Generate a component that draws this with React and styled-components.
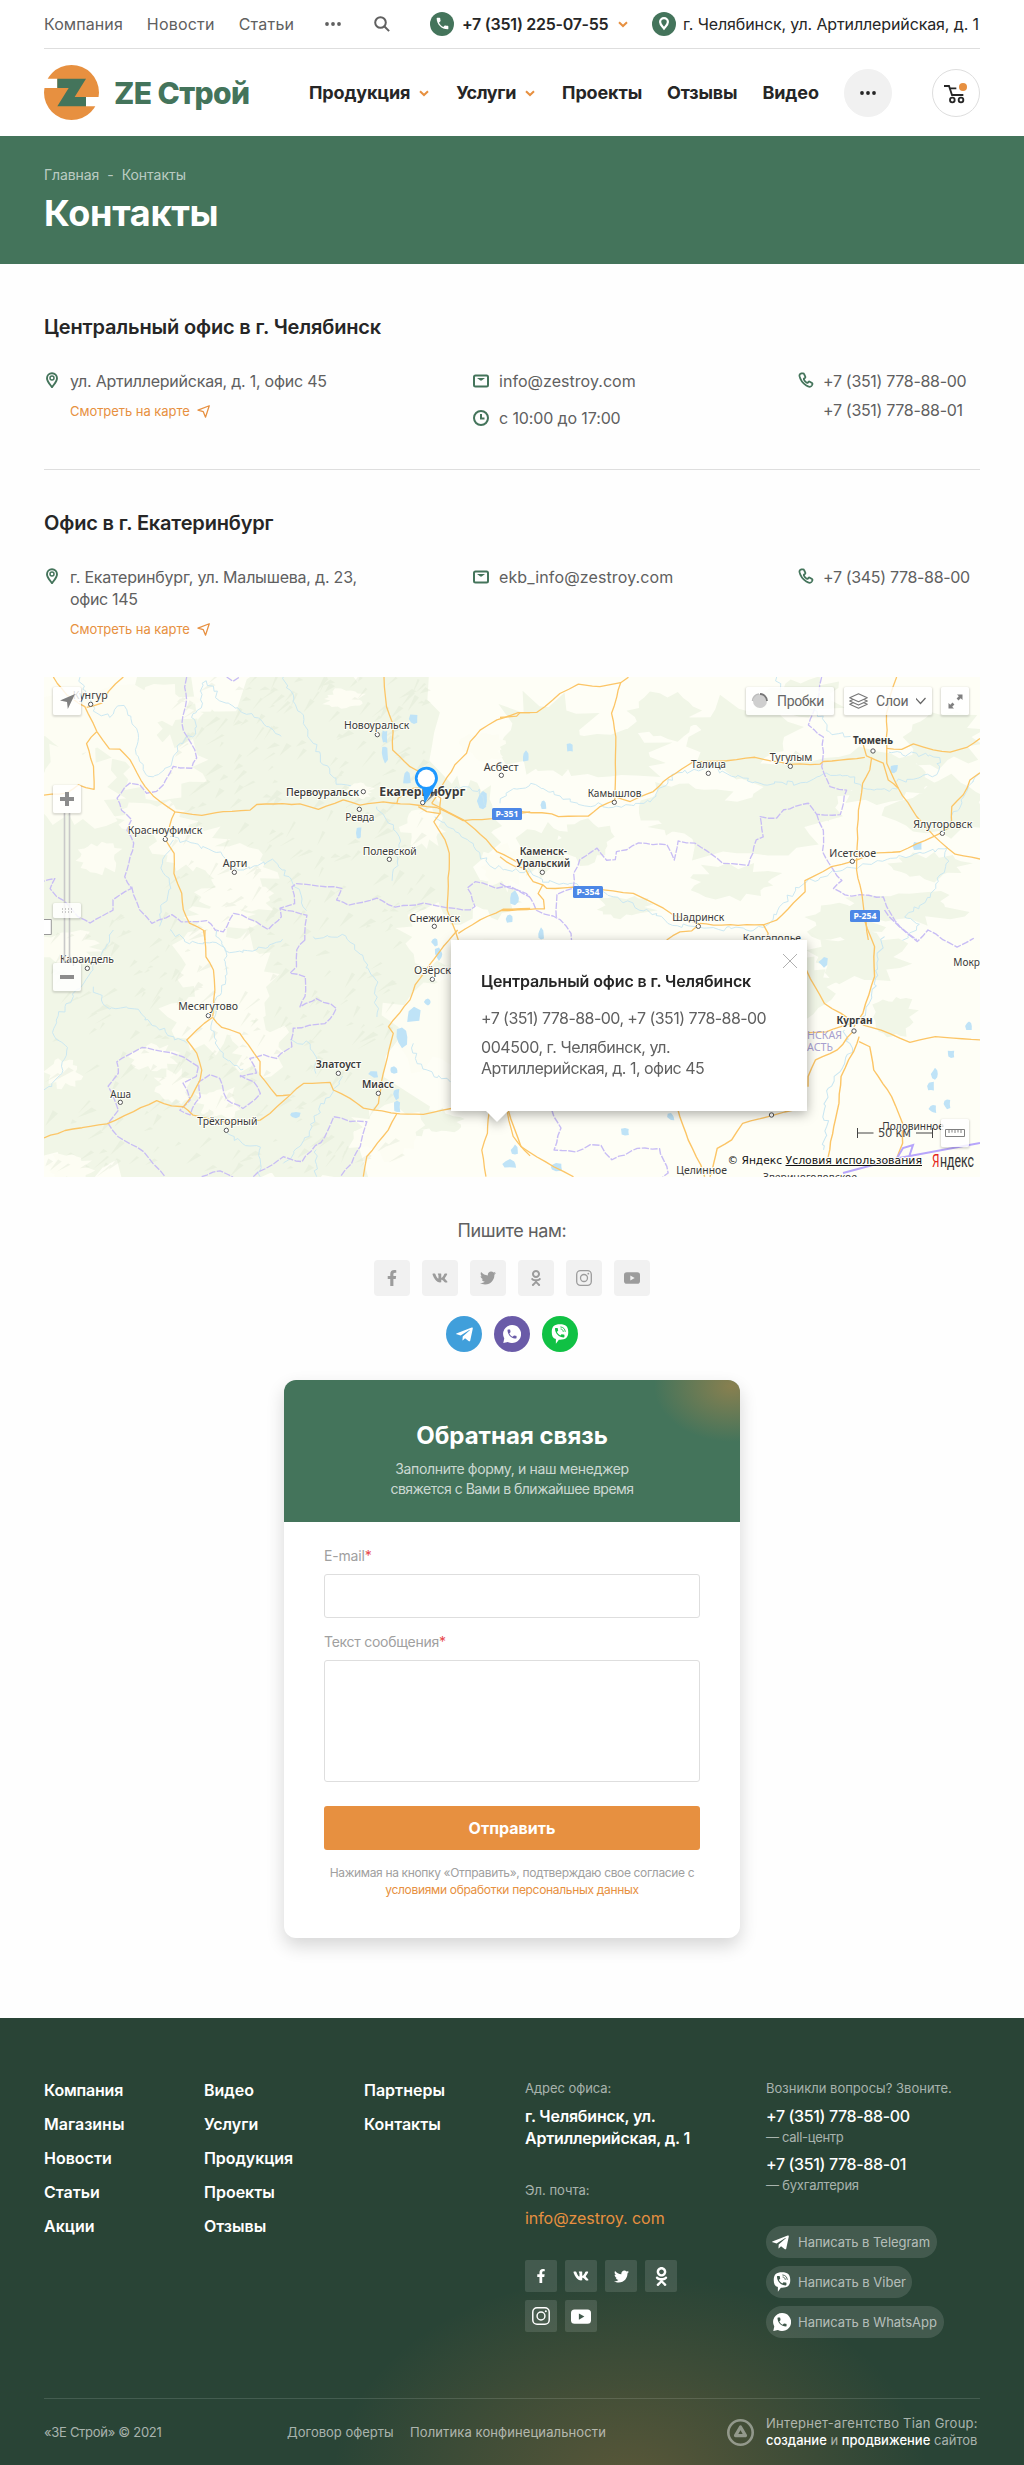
import React from "react";
import styled, { createGlobalStyle, css } from "styled-components";
import { FaFacebookF, FaVk, FaTwitter, FaOdnoklassniki, FaTelegramPlane } from "react-icons/fa";

const green = "#44745b";
const orange = "#e79040";
const dark = "#262626";
const grey = "#606060";
const line = "#dedede";
const pale = "rgba(255, 255, 255, 0.6)";

const GlobalStyle = createGlobalStyle`
  *, *::before, *::after { box-sizing: border-box; }
  body { margin: 0; background: #fefefe; font-family: Inter, "Open Sans", sans-serif; color: ${dark}; }
  svg { display: block; flex: none; }
  h1, h2, p, ul { margin: 0; padding: 0; }
  a { color: inherit; text-decoration: none; }
`;

/* ---------- shared text ---------- */

const Text = styled.span`
  display: ${(p) => (p.$block ? "block" : "inline-block")};
  white-space: nowrap;
  letter-spacing: ${(p) => p.$ls || 0}px;
`;

/* ---------- header ---------- */

const Header = styled.header`
  height: 136px;
  padding: 0 44px;
  background: #fff;
`;

const TopBar = styled.div`
  height: 49px;
  padding-bottom: 1px;
  display: flex;
  align-items: center;
  border-bottom: 1px solid ${line};
  font-size: 16px;
  font-weight: 400;
  line-height: 22px;
`;

const TopLinks = styled.nav`
  display: flex;
  gap: 24px;
  width: 281px;
  color: ${grey};
`;

const TopTools = styled.div`
  display: flex;
  align-items: center;
  gap: 33px;
  width: 105px;
  color: ${grey};
`;

const TopPhone = styled.div`
  display: flex;
  align-items: center;
  gap: 8px;
  width: 222px;
  font-weight: 600;
`;

const TopAddress = styled.div`
  display: flex;
  align-items: center;
  gap: 7px;
`;

const Badge = styled.span`
  flex: none;
  width: 24px;
  height: 24px;
  border-radius: 50%;
  background: ${green};
  color: #fff;
  display: flex;
  align-items: center;
  justify-content: center;
`;

const MainBar = styled.div`
  height: 87px;
  display: flex;
  align-items: center;
`;

const Logo = styled.a`
  display: flex;
  align-items: center;
  gap: 15px;
  width: 265px;
  color: ${green};
  font-size: 30px;
  font-weight: 800;
  line-height: 36px;
`;

const Nav = styled.nav`
  display: flex;
  align-items: center;
  gap: 25px;
  font-size: 18px;
  font-weight: 700;
  line-height: 24px;
`;

const NavItem = styled.a`
  display: flex;
  align-items: center;
  gap: 7px;
`;

const RoundButton = styled.button`
  width: 48px;
  height: 48px;
  padding: 0;
  border-radius: 50%;
  border: 1px solid ${(p) => (p.$outlined ? line : "#f1f1f1")};
  background: ${(p) => (p.$outlined ? "#fff" : "#f1f1f1")};
  color: ${dark};
  display: flex;
  align-items: center;
  justify-content: center;
  margin-left: ${(p) => (p.$outlined ? "auto" : 0)};
`;

/* ---------- hero ---------- */

const Hero = styled.section`
  height: 128px;
  padding: 29px 44px 0;
  background: ${green};
  color: #fff;
`;

const Crumbs = styled.div`
  display: flex;
  gap: 8px;
  font-size: 14px;
  line-height: 20px;
  color: rgba(255, 255, 255, 0.65);
`;

const Title = styled.h1`
  margin-top: 5px;
  font-size: 36px;
  font-weight: 700;
  line-height: 46px;
  letter-spacing: -0.25px;
`;

/* ---------- offices ---------- */

const Page = styled.main`
  padding: 49px 44px 80px;
`;

const Office = styled.section`
  ${(p) =>
    p.$divided &&
    css`
      padding-bottom: 40px;
      margin-bottom: 39px;
      border-bottom: 1px solid ${line};
    `}
`;

const OfficeName = styled.h2`
  font-size: 20px;
  font-weight: 600;
  line-height: 28px;
  letter-spacing: -0.17px;
`;

const OfficeGrid = styled.div`
  display: grid;
  grid-template-columns: 429px 325px 1fr;
  align-items: start;
  margin-top: 29px;
  font-size: 16px;
  font-weight: 400;
  line-height: 22px;
  color: ${grey};
`;

const Stack = styled.div`
  display: flex;
  flex-direction: column;
  align-items: flex-start;
  gap: ${(p) => p.$gap || 0}px;
`;

const Contact = styled.div`
  display: flex;
  align-items: flex-start;
  gap: ${(p) => p.$gap ?? 10}px;
  > svg { margin-top: ${(p) => p.$drop ?? 3}px; }
`;

const MapLink = styled.a`
  display: flex;
  align-items: center;
  gap: 7px;
  font-size: 13px;
  line-height: 18px;
  color: ${orange};
`;

/* ---------- map ---------- */

const MapBox = styled.section`
  position: relative;
  height: 500px;
  margin-top: 39px;
  overflow: hidden;
`;

const MapButton = styled.button`
  position: absolute;
  left: ${(p) => p.$x}px;
  top: ${(p) => p.$y}px;
  width: ${(p) => p.$w || 28}px;
  height: ${(p) => p.$h || 28}px;
  padding: 0 ${(p) => (p.$w > 28 ? 5 : 0)}px;
  border: 0;
  border-radius: 2px;
  background: rgba(255, 255, 255, 0.82);
  box-shadow: 0 1px 2px 1px rgba(0, 0, 0, 0.13);
  display: flex;
  align-items: center;
  gap: ${(p) => (p.$w > 28 ? 8 : 0)}px;
  justify-content: ${(p) => (p.$w > 28 ? "flex-start" : "center")};
  color: #666;
  font-family: Roboto, sans-serif;
  font-size: 14px;
`;

const Balloon = styled.div`
  position: absolute;
  left: 407px;
  top: 263px;
  width: 356px;
  height: 171px;
  padding: 30px 30px 0;
  background: #fff;
  filter: drop-shadow(0 3px 6px rgba(0, 0, 0, 0.33));
  font-size: 16px;
  line-height: 21px;
  color: ${grey};

  &::after {
    content: "";
    position: absolute;
    left: 35px;
    top: 171px;
    border: 11.5px solid transparent;
    border-top-color: #fff;
    border-bottom: 0;
  }
`;

const BalloonTitle = styled.div`
  margin: 1px 0 16px;
  font-weight: 600;
  color: ${dark};
`;

const BalloonRow = styled.div`
  margin-bottom: 8px;
`;

const CloseButton = styled.button`
  position: absolute;
  right: 9px;
  top: 13px;
  padding: 0;
  border: 0;
  background: none;
`;

/* ---------- feedback ---------- */

const Write = styled.section`
  display: flex;
  flex-direction: column;
  align-items: center;
  padding-top: 41px;
  font-size: 18px;
  line-height: 26px;
  color: ${grey};
`;

const IconRow = styled.div`
  display: flex;
  gap: 12px;
  margin-top: ${(p) => p.$top}px;
`;

const Tile = styled.a`
  width: ${(p) => (p.$footer ? 32 : 36)}px;
  height: ${(p) => (p.$footer ? 32 : 36)}px;
  border-radius: ${(p) => (p.$footer ? 2 : 4)}px;
  background: ${(p) => (p.$footer ? "rgba(255,255,255,0.12)" : "#f1f1f1")};
  color: ${(p) => (p.$footer ? "#fff" : "#9c9c9c")};
  display: flex;
  align-items: center;
  justify-content: center;
`;

const Disc = styled.a`
  width: 36px;
  height: 36px;
  border-radius: 50%;
  background: ${(p) => p.$color};
  color: #fff;
  display: flex;
  align-items: center;
  justify-content: center;
`;

const Card = styled.form`
  width: 456px;
  height: 558px;
  margin: 28px auto 0;
  border-radius: 12px;
  background: #fff;
  box-shadow: 0 8px 18px rgba(0, 0, 0, 0.16);
  overflow: hidden;
`;

const CardHead = styled.div`
  height: 142px;
  padding-top: 40px;
  text-align: center;
  color: #fff;
  background: radial-gradient(ellipse 78px 56px at 448px 6px, rgba(231, 144, 64, 0.42), rgba(231, 144, 64, 0)) ${green};
`;

const CardTitle = styled.div`
  font-size: 24px;
  font-weight: 700;
  line-height: 31px;
`;

const CardLead = styled.p`
  margin-top: 8px;
  font-size: 14px;
  line-height: 20px;
  color: rgba(255, 255, 255, 0.74);
`;

const CardBody = styled.div`
  padding: 25px 40px 0;
`;

const Label = styled.label`
  display: block;
  margin-top: ${(p) => p.$top || 0}px;
  height: 27px;
  font-size: 14px;
  line-height: 18px;
  color: #a0a0a0;
`;

const Required = styled.span`
  color: #e8484c;
`;

const fieldStyle = css`
  display: block;
  width: 100%;
  border: 1px solid ${line};
  border-radius: 3px;
  background: #fff;
  outline: none;
  padding: 8px 12px;
`;

const Input = styled.input`
  ${fieldStyle}
  height: 44px;
`;

const Area = styled.textarea`
  ${fieldStyle}
  height: 122px;
  resize: none;
`;

const Submit = styled.button`
  width: 100%;
  height: 44px;
  margin-top: 24px;
  border: 0;
  border-radius: 3px;
  background: ${orange};
  color: #fff;
  font: 700 16px Inter, sans-serif;
`;

const Consent = styled.p`
  margin-top: 14px;
  text-align: center;
  font-size: 12px;
  line-height: 17px;
  color: #a0a0a0;
  a { color: ${orange}; }
`;

/* ---------- footer ---------- */

const Footer = styled.footer`
  height: 447px;
  padding: 61px 44px 0;
  color: #fff;
  background: radial-gradient(ellipse 300px 215px at 630px 470px, rgba(231, 144, 64, 0.26), rgba(231, 144, 64, 0)) #294436;
`;

const FooterGrid = styled.div`
  display: grid;
  grid-template-columns: 160px 160px 161px 241px 1fr;
  height: 319px;
`;

const FooterLinks = styled.div`
  display: flex;
  flex-direction: column;
  gap: 12px;
  font-size: 16px;
  font-weight: 600;
  line-height: 22px;
`;

const Caption = styled.div`
  margin-top: ${(p) => p.$top || 0}px;
  font-size: 13px;
  line-height: 18px;
  color: ${pale};
`;

const Value = styled.div`
  margin-top: ${(p) => p.$top ?? 8}px;
  font-size: 16px;
  font-weight: ${(p) => p.$weight || 500};
  line-height: 22px;
  color: ${(p) => p.$color || "#fff"};
`;

const FooterTiles = styled.div`
  display: flex;
  flex-wrap: wrap;
  gap: 8px;
  width: 152px;
  margin-top: 31px;
`;

const Pills = styled.div`
  display: flex;
  flex-direction: column;
  align-items: flex-start;
  gap: 8px;
  margin-top: 32px;
`;

const Pill = styled.a`
  width: ${(p) => p.$w}px;
  height: 32px;
  padding-left: 5px;
  border-radius: 16px;
  background: rgba(255, 255, 255, 0.12);
  display: flex;
  align-items: center;
  font-size: 13px;
  color: rgba(255, 255, 255, 0.62);
`;

const PillIcon = styled.span`
  width: 27px;
  color: #fff;
  display: flex;
  padding-left: ${(p) => p.$pad || 0}px;
`;

const BottomBar = styled.div`
  display: grid;
  grid-template-columns: 243px 123px 317px 39px 1fr;
  align-items: center;
  height: 67px;
  border-top: 1px solid rgba(255, 255, 255, 0.13);
  font-size: 13px;
  line-height: 17px;
  color: ${pale};
  b { font-weight: 500; color: #fff; }
`;

/* ---------- icons ---------- */

const handset =
  "M6.62 10.79c1.44 2.83 3.76 5.14 6.59 6.59l2.2-2.2c.27-.27.67-.36 1.02-.24 1.12.37 2.33.57 3.57.57.55 0 1 .45 1 1V20c0 .55-.45 1-1 1-9.39 0-17-7.61-17-17 0-.55.45-1 1-1h3.5c.55 0 1 .45 1 1 0 1.25.2 2.45.57 3.57.11.35.03.74-.25 1.02l-2.2 2.2z";
const tube =
  "M5.2 2.1 3.6 2.7C2.4 3.3 2 4.5 2.3 6.2c1 5 5 10.6 10.2 14.2 2 1.3 4.4 2 6 1.7 1.2-.2 2-1 2.5-2.2l.6-1.7c.2-.7 0-1.3-.6-1.7l-3.3-2c-.7-.4-1.4-.3-1.9.3l-1 1.2c-.4.5-1 .5-1.6.2-1.7-1.1-3.3-2.9-4.3-4.9-.3-.6-.2-1.1.3-1.5l1.2-.9c.6-.5.8-1.1.5-1.9L9.2 3.2c-.3-.8-.9-1.2-1.7-1.2z";

const Chevron = () => (
  <svg width="14" height="14" viewBox="0 0 14 14" fill="none" stroke={orange} strokeWidth="2">
    <path d="M3 5.2 7 9l4-3.8" />
  </svg>
);
const Dots = () => (
  <svg width="16" height="6" viewBox="0 0 16 6" fill="currentColor">
    <circle cx="2" cy="3" r="1.9" /><circle cx="8" cy="3" r="1.9" /><circle cx="14" cy="3" r="1.9" />
  </svg>
);
const SearchIcon = () => (
  <svg width="16" height="16" viewBox="0 0 16 16" fill="none" stroke="currentColor" strokeWidth="2">
    <circle cx="6.5" cy="6.5" r="5.3" /><path d="m10.5 10.5 4.6 4.6" />
  </svg>
);
const LogoMark = () => (
  <svg width="55" height="55" viewBox="132 195 165 165">
    <circle cx="214.5" cy="277.5" r="82.5" fill={orange} />
    <path d="M130 236h42v28h-42zM258 291h42v28h-42z" fill="#fff" />
    <path d="M172 236h86l-34 55h34v28h-86l34-55h-34z" fill={green} />
  </svg>
);
const CartIcon = () => (
  <svg width="24" height="22" viewBox="1296 246 72 66" fill="none" stroke={dark} strokeWidth="5.5">
    <path d="M1296 258h15l9 27h34M1315 265h18" />
    <circle cx="1321" cy="300" r="7" /><circle cx="1347" cy="300" r="7" />
    <circle cx="1353" cy="261" r="12" fill={orange} stroke="none" />
  </svg>
);
const PinIcon = () => (
  <svg width="24" height="16" viewBox="0 0 24 16" fill="none" stroke={green}>
    <path d="M8 15.2C5.8 12 3 9.3 3 6.2a5 5 0 0 1 10 0c0 3.1-2.8 5.8-5 9z" strokeWidth="1.9" />
    <circle cx="8" cy="6" r="2" strokeWidth="1.5" />
  </svg>
);
const BadgePin = () => (
  <svg width="12" height="14" viewBox="0 0 12 14" fill="none" stroke="#fff">
    <path d="M6 11.5C4.300 9.300 2.100 7.500 2.100 5a3.900 3.900 0 0 1 7.800 0c0 2.500-2.200 4.300-3.900 6.500z" strokeWidth="2.200" />
  </svg>
);
const MailIcon = () => (
  <svg width="16" height="16" viewBox="0 0 16 16">
    <rect x="1" y="2.500" width="14" height="11" rx="1.500" fill="none" stroke={green} strokeWidth="2" />
    <path d="M4 5h8L9 7.300q-1 .8-2 0z" fill={green} />
  </svg>
);
const ClockIcon = () => (
  <svg width="16" height="16" viewBox="0 0 16 16" fill="none" stroke={green} strokeWidth="2">
    <circle cx="8" cy="8" r="7" /><path d="M8 4v4.500h3.500" />
  </svg>
);
const PhoneIcon = () => (
  <svg width="16" height="16" viewBox="0 0 24 24" fill="none" stroke={green} strokeWidth="2.700">
    <path d={tube} />
  </svg>
);
const ArrowIcon = () => (
  <svg width="13" height="13" viewBox="0 0 12 12" fill="none" stroke={orange} strokeWidth="1.200" strokeLinejoin="round">
    <path d="M11.300.7.900 4.700l4.900 1.500L7.900 11.200z" />
  </svg>
);
const InstagramIcon = ({ size = 16 }) => (
  <svg width={size} height={size} viewBox="0 0 16 16" fill="none" stroke="currentColor" strokeWidth="1.300">
    <rect x=".7" y=".7" width="14.600" height="14.600" rx="3.800" />
    <circle cx="8" cy="8" r="3.500" /><circle cx="12.300" cy="3.700" r=".9" fill="currentColor" stroke="none" />
  </svg>
);
const TubeIcon = ({ size = 16, hole }) => (
  <svg width={size} height={size * 0.75} viewBox="0 0 16 12">
    <rect y=".3" width="16" height="11.400" rx="2.800" fill="currentColor" />
    <path d="M6.300 3.500v5L10.700 6z" fill={hole} />
  </svg>
);
const WhatsAppIcon = ({ hole }) => (
  <svg width="18" height="18" viewBox="0 0 24 24">
    <path d="M12 0a12 12 0 1 1-5.500 22.600L.4 24l1.300-6A12 12 0 0 1 12 0z" fill="currentColor" />
    <path d={handset} fill={hole} transform="translate(4 4) scale(.67)" />
  </svg>
);
const ViberIcon = ({ hole }) => (
  <svg width="18" height="20" viewBox="0 0 24 26">
    <path d="M12 0c7.500 0 11 3 11 10.200S19.500 20.500 12 20.500h-1.500L6.500 26v-6.300C2.500 18.500 1 15.500 1 10.200 1 3 4.500 0 12 0z" fill="currentColor" />
    <path d={handset} fill={hole} transform="translate(3.200 2.800) scale(.7)" />
    <path d="M12.500 3.600c3.900.2 6.400 2.800 6.500 6.600M12.800 6.300c2.200.2 3.500 1.600 3.600 3.900" fill="none" stroke={hole} strokeWidth="1.200" />
  </svg>
);
const AgencyMark = () => (
  <svg width="27" height="27" viewBox="0 0 27 27" fill="none" stroke="rgba(255,255,255,.42)" strokeLinejoin="round">
    <circle cx="13.500" cy="13.500" r="12.200" strokeWidth="2.600" />
    <path d="M13.500 8 18.500 16.600H8.500z" strokeWidth="3.200" />
  </svg>
);

/* ---------- map drawing ---------- */

const seeded = (seed) => () => {
  seed = (seed * 16807) % 2147483647;
  return seed / 2147483647;
};

const parse = (s) => s.split(" ").map((p) => p.split(",").map(Number));

// Breaks a polyline into short segments and shifts each joint a little.
const wiggle = (s, amp, step, seed = 7) => {
  const rnd = seeded(seed + s.length * 31);
  const pts = parse(s);
  const out = [pts[0]];
  for (let i = 1; i < pts.length; i++) {
    const [ax, ay] = pts[i - 1];
    const [bx, by] = pts[i];
    const n = Math.max(1, Math.round(Math.hypot(bx - ax, by - ay) / step));
    for (let k = 1; k <= n; k++) {
      const end = k === n ? 0.4 : 1;
      out.push([
        ax + ((bx - ax) * k) / n + (rnd() - 0.5) * amp * end,
        ay + ((by - ay) * k) / n + (rnd() - 0.5) * amp * end,
      ]);
    }
  }
  return "M" + out.map((p) => p.map((v) => v.toFixed(1)).join(" ")).join("L");
};

// A jagged blob: [centre x, centre y, radius x, radius y].
const blob = ([cx, cy, rx, ry], i) => {
  const rnd = seeded(cx * 13 + cy * 7 + i * 101 + 1);
  const n = rx < 14 ? 8 : 26;
  let d = "";
  for (let k = 0; k < n; k++) {
    const a = (k / n) * Math.PI * 2;
    const r = 0.62 + rnd() * 0.55;
    d += `${k ? "L" : "M"}${(cx + Math.cos(a) * rx * r).toFixed(1)} ${(cy + Math.sin(a) * ry * r).toFixed(1)}`;
  }
  return d + "Z";
};

const woods = [
  [120, 270, 175, 300], [250, 100, 140, 110], [300, 230, 130, 120], [230, 400, 170, 130], [330, 70, 90, 90],
  [390, 190, 60, 90], [340, 300, 70, 40], [160, 130, 60, 90], [60, 420, 110, 90], [100, 130, 50, 60],
  [500, 60, 55, 45], [560, 80, 70, 28], [620, 40, 38, 26], [700, 60, 60, 40], [700, 150, 90, 40], [640, 130, 50, 30],
  [760, 110, 60, 32], [840, 100, 60, 28], [900, 130, 55, 30], [860, 230, 60, 18], [540, 165, 34, 24], [500, 175, 28, 26],
  [580, 230, 30, 12], [690, 205, 50, 18], [885, 190, 40, 14], [800, 245, 40, 20], [430, 140, 28, 36], [450, 220, 26, 20],
  [755, 310, 40, 30], [815, 280, 50, 26], [420, 400, 14, 8], [850, 340, 22, 24], [395, 445, 26, 12], [5, 60, 30, 40],
  [30, 205, 60, 50], [760, 20, 40, 20], [900, 60, 40, 30],
];
const fields = [
  [60, 45, 85, 40], [120, 90, 45, 30], [35, 110, 45, 45], [110, 140, 40, 16], [55, 180, 24, 16],
  [145, 170, 38, 28], [190, 190, 45, 22], [195, 220, 46, 20], [180, 240, 36, 14], [115, 30, 40, 22],
  [315, 114, 14, 8], [165, 280, 34, 45], [165, 340, 50, 34], [200, 310, 34, 50], [215, 370, 30, 28], [110, 380, 24, 14],
  [22, 270, 36, 16], [20, 395, 18, 16], [130, 410, 20, 18], [175, 425, 24, 16],
  [380, 150, 22, 20], [300, 22, 22, 10], [440, 70, 24, 14],
  [385, 350, 46, 46], [390, 260, 34, 32], [345, 455, 40, 30], [445, 300, 40, 40],
  [25, 490, 26, 14], [460, 190, 26, 22],
];

const roads = {
  nw: [
    "70,21 110,75 165,110 200,185 238,237 270,238 300,270 345,350 370,378 435,425 515,436 580,425 660,420 680,403 810,402 865,418 940,390 990,405 1060,396 1165,406 1220,412 1300,452 1385,445 1500,425",
    "280,21 235,65 215,100 170,112", "200,185 170,220 190,290 192,358 145,345 110,370 42,375",
    "435,425 418,470 406,508 432,550 432,610 455,670 460,720 478,760 520,780 525,810",
    "1062,21 1070,110 1088,160 1088,240 1140,290 1180,310 1185,400",
    "1500,128 1465,128 1400,150 1350,180 1320,215 1310,250 1275,285 1240,340 1205,400",
    "1100,402 1105,385 1150,355 1190,350 1232,385 1230,430 1190,425 1165,410",
    "1205,400 1300,450 1370,510 1400,545 1460,575 1500,590", "1230,430 1212,455 1245,510 1258,550 1252,720 1275,780 1285,810",
    "1285,790 1350,750 1420,718 1500,715",
  ],
  ne: [
    "0,142 50,138 60,128 110,128 180,70 235,42 300,50 362,38 386,22", "362,38 350,80 335,130 347,200 345,390",
    "345,390 300,410 265,438 175,440 155,432 65,425",
    "345,380 390,395 460,365 490,335 545,297 580,275 680,272 765,262 870,283 960,283 970,275 1095,262",
    "0,560 45,590 75,595 100,635 130,645 140,655 220,652 310,660 400,670 490,715 520,735 600,762",
    "128,645 115,670 130,690 133,716 0,722",
    "600,760 640,765 790,764 830,750 915,665 915,632 995,590 1055,575 1130,548 1200,545 1300,500 1325,488 1355,465 1355,410 1390,375 1410,330 1440,308",
    "790,764 805,790 800,810", "500,810 540,785 575,782 600,762",
    "1190,21 1170,80 1160,130 1160,280 1195,355 1250,440 1300,495 1365,553 1440,567",
    "1090,225 1100,258 1150,280 1165,330 1195,355", "1160,235 1205,238 1240,222 1300,240 1350,246 1400,232 1440,205",
    "1115,262 1110,300 1088,340 1075,420 1070,560 1070,600 1085,670 1105,810",
  ],
  sw: [
    "525,0 528,80 550,120 555,180 548,260", "548,262 500,300 470,330 500,370 515,420 510,450 485,500 460,530 490,555 600,580 690,570 720,550 780,495 820,460 900,458 910,480 960,505 1000,535 1110,552 1180,553 1263,535",
    "548,262 575,292 630,310 655,345 690,395 690,435 740,497 780,495", "42,624 105,602 230,582 310,545 380,512 425,528 460,530",
    "1283,0 1240,50 1155,165 1140,210 1075,290 1090,310 1060,430 1045,520 1030,540", "1100,552 1075,600 1010,680 1000,740",
    "1378,545 1372,610 1355,660 1368,740", "1432,545 1450,620 1500,678",
  ],
  se: [
    "1035,180 1085,280 1150,325", "1040,368 1090,365 1130,350 1166,335", "1163,365 1120,420 1060,450 1040,500 1040,530",
    "1195,30 1222,110 1222,200 1190,310 1166,350", "1190,345 1240,360 1320,397 1390,380 1513,390",
    "1180,380 1175,400 1130,500 1125,580 1110,650 1095,740", "1180,395 1210,410 1220,480 1270,560 1300,640 1300,700 1285,740",
    "1000,600 930,620 860,640 830,690 790,715 780,760 770,800", "682,600 710,690 745,765 755,800", "215,600 250,710 340,770 395,800",
  ],
};
const borders = {
  nw: [
    "470,21 465,50 470,90 455,160 470,200 495,240 500,265 485,295 430,290 400,345 380,365 350,370 330,345 300,340 260,385 275,420 305,450 290,480 310,520 285,620 305,655 250,690 250,720 180,760 145,740 100,690 80,680 60,655 75,625 42,632",
    "305,650 330,720 365,760 425,735 455,755 530,752 555,780 580,785 610,730 680,755 715,778 755,740 750,715 795,700 785,650 800,640 935,655 920,690 955,705 1040,685 1095,712 1180,700 1320,720 1335,710 1312,655 1335,635 1400,655 1440,650 1500,680",
    "750,715 830,735 825,810", "590,21 610,34 628,21",
  ],
  ne: [
    "965,21 955,90 925,165 970,200 965,290 990,350 1040,360 1020,435 950,432 925,400 850,420 830,445 780,440 790,500 770,510 745,585 670,580 585,520 535,512 522,570 500,525 415,518 380,540 350,545 345,570 320,570 290,535 240,570 222,610 220,655 170,672 168,745",
    "0,640 50,660 80,670 110,720 180,750 212,790 215,810",
    "950,432 970,480 968,545 1000,600 1025,632 1000,655 1035,675 1150,680 1160,710 1200,770 1250,810",
  ],
  sw: [
    "825,30 800,60 800,110 780,130 825,140 825,200 810,230 860,205 920,235 885,280 790,295 785,350 740,385 700,375 660,385 680,430 630,440",
    "505,410 460,380 335,352 260,395 265,430 235,470 265,540 235,580 265,620 340,665 370,700 405,740",
    "505,410 500,440 460,460 480,510 450,540 480,555 510,500 505,455 540,435 570,445 590,510 640,535 690,490 670,455 630,435",
    "670,740 760,680 815,695 885,620 910,560 960,575 1010,575 990,650 965,700 930,740", "515,740 570,722 610,740",
  ],
  se: [
    "335,600 360,655 340,720 400,725 440,705 470,705 500,750 570,715 630,715 655,790 640,800",
    "1250,0 1290,50 1340,95 1370,60 1450,112 1495,85",
  ],
};
const rivers = {
  nw: [
    "150,21 160,60 200,130 240,140 280,105 300,140 325,190 315,240 340,300 370,320 420,290 450,220 500,190 490,130 520,100 510,60 530,30 570,90 650,130 700,160 755,200",
    "760,21 790,90 820,150 850,220 890,290 920,340 960,350", "420,500 480,520 560,545 640,600 730,570 790,640 830,720",
    "1040,410 1070,450 1110,500 1105,580 1085,630", "1215,440 1270,480 1330,520 1380,590 1500,605", "430,510 395,590 420,640 400,700 390,770", "1200,370 1300,350 1350,360 1370,410",
  ],
  ne: [
    "0,400 40,355 110,345 180,380 230,400 350,410 450,395 530,310 640,295 760,340 900,340 980,310 1050,320 1100,360 1190,360",
    "1190,335 1240,330 1310,315 1320,260 1200,250 1165,245", "75,580 130,635 220,640 340,680 430,720 530,765 640,775 760,780 810,760 850,700 910,640 1020,600 1160,570 1340,535 1340,580 1290,680 1215,740 1260,760 1210,810",
    "830,21 850,80 900,110 970,140 980,180 1050,200", "1440,310 1400,360 1370,420 1345,480",
  ],
  sw: [
    "250,0 220,60 170,150 110,220 80,270 70,320 110,350 95,430 42,480", "190,170 240,240 310,235 380,290 470,340",
    "560,0 585,60 585,150 560,200 540,300 580,380 640,420", "850,20 950,20 1000,90 1040,150 1040,260", "420,0 480,40 560,40 600,70 680,60 760,30",
    "690,740 690,650 640,640 590,600", "860,740 860,660", "1150,340 1160,400 1220,440 1263,455", "780,330 840,340 860,390 860,430", "760,700 840,620 850,560 900,500 940,440",
  ],
  se: ["1250,80 1230,150 1225,230 1200,290 1180,340", "1140,360 1160,430 1110,510 1085,580 1090,650 1080,720"],
};
const lakes = [
  [370, 42, 5, 6], [341, 60, 3, 8], [341, 76, 4, 9], [363, 100, 5, 8], [439, 124, 6, 12], [482, 80, 4, 6], [526, 71, 4, 5], [315, 156, 3, 7],
  [471, 221, 6, 7], [466, 242, 4, 5], [500, 128, 3, 5], [497, 257, 4, 6], [370, 339, 9, 8], [358, 360, 8, 12], [330, 397, 5, 4], [353, 430, 4, 6],
  [395, 277, 5, 6], [391, 265, 4, 5], [384, 325, 4, 4], [466, 487, 8, 5], [471, 473, 4, 5], [512, 490, 8, 5], [581, 455, 5, 4], [627, 440, 4, 4],
  [850, 92, 5, 5], [780, 285, 5, 5], [925, 349, 4, 6], [907, 377, 4, 4], [891, 397, 4, 6], [887, 409, 4, 6], [903, 427, 4, 5], [889, 432, 4, 5],
  [350, 393, 5, 4], [874, 169, 5, 5], [352, 417, 4, 6], [252, 438, 6, 3],
];

const labels = {
  nw: [
    ["Кунгур", 128, 233, 86, 182, 103], ["Новоуральск", 942, 1138, 178, 1042, 194], ["Асбест", 1361, 1466, 303, 1414, 316],
    ["Первоуральск", 768, 987, 377, 1000, 365, 500], ["Екатеринбург", 1048, 1306, 378, 1178, 398, 700], ["Ревда", 946, 1033, 453, 988, 418],
    ["Красноуфимск", 293, 517, 492, 406, 508], ["Арти", 578, 652, 591, 613, 607], ["Полевской", 998, 1160, 556, 1078, 568], ["Снежинск", 1138, 1290, 756, 1213, 769],
  ],
  ne: [
    ["Талица", 573, 678, 295, 625, 310], ["Тугулым", 809, 937, 272, 871, 289], ["Тюмень", 1059, 1179, 223, 1119, 243, 700],
    ["Камышлов", 263, 424, 382, 343, 397], ["Каменск-", 59, 201, 556, null, null, 600], ["Уральский", 49, 211, 592, 127, 607, 600],
    ["Ялуторовск", 1240, 1417, 474, 1327, 490], ["Исетское", 988, 1128, 560, 1057, 574], ["Шадринск", 517, 673, 753, 595, 769], ["Каргаполье", 728, 903, 817],
  ],
  sw: [
    ["Караидель", 90, 252, 98, 172, 115], ["Озёрск", 1152, 1263, 131, 1207, 148], ["Месягутово", 445, 624, 241, 535, 257],
    ["Златоуст", 857, 993, 414, 925, 430, 600], ["Миасс", 996, 1092, 475, 1045, 490, 600], ["Аша", 241, 303, 504, 271, 517], ["Трёхгорный", 502, 682, 584, 589, 601],
  ],
  far: [
    ["Курган", 2377.5, 2485.5, 1040, 2430, 1062, 700], ["Мокр", 2728, 2808, 867], ["Половинное", 2515, 2700, 1358], ["Целинное", 1897, 2049, 1491], ["Звериноголовское", 2157, 2439, 1512],
  ],
};

const tiles = {
  nw: "translate(-14 -7) scale(.33333)",
  ne: "translate(456 -7) scale(.33333)",
  sw: "translate(-14 253) scale(.33333)",
  se: "translate(386 233) scale(.36364 .33333)",
  far: "scale(.33333)",
};

const TownLabel = ({ item: [text, x0, x1, y, dx, dy, weight = 400] }) => (
  <g>
    {dx != null && <circle cx={dx} cy={dy} r="6.500" fill="#fff" stroke="#555" strokeWidth="3" />}
    <text
      x={x0} y={y} textLength={x1 - x0} lengthAdjust="spacingAndGlyphs" fontWeight={weight}
      fontSize={text === "Екатеринбург" ? 37 : 33} fill="#3a3a3a" stroke="#fffff8" strokeWidth="6" strokeLinejoin="round" paintOrder="stroke"
    >
      {text}
    </text>
  </g>
);

const Shield = ({ x, y, children }) => (
  <g transform={`translate(${x} ${y})`}>
    <rect width="30" height="12" rx="1.500" fill="#4c87e6" />
    <text x="3.500" y="9.400" textLength="23" lengthAdjust="spacingAndGlyphs" fontSize="9.500" fontWeight="700" fill="#fff">{children}</text>
  </g>
);

const relief = (() => {
  const rnd = seeded(4242);
  const out = [];
  for (let i = 0; i < 420; i++) {
    const y = rnd() * 500;
    const x = y < 240 ? 120 + rnd() * 260 : rnd() * 350;
    const len = 4 + rnd() * 16;
    const a = -0.9 + (rnd() - 0.5) * 0.7;
    const w = 1.5 + rnd() * 4;
    const ex = Math.cos(a) * len;
    const ey = Math.sin(a) * len;
    out.push(`M${x.toFixed(1)} ${y.toFixed(1)}l${ex.toFixed(1)} ${ey.toFixed(1)} ${w.toFixed(1)} ${(w * 0.6).toFixed(1)}z`);
  }
  return out.join("");
})();

const MapDrawing = () => (
  <svg width="936" height="500" viewBox="0 0 936 500" fontFamily='"Noto Sans", "Open Sans", sans-serif'>
    <rect width="936" height="500" fill="#fefef6" />
    <path d={woods.map(blob).join("")} fill="#f1f6e7" />
    <path d={fields.map(blob).join("")} fill="#fdfdf3" />
    <path d={relief} fill="#d9e2cc" opacity=".32" />
    <path d={lakes.map(blob).join("")} fill="#bfe3f7" />
    {["nw", "ne", "sw", "se"].map((k) => (
      <g key={k} transform={tiles[k]} fill="none" strokeLinejoin="round">
        {rivers[k].map((s) => <path key={s} d={wiggle(s, 15, 12)} stroke="#c8e6f2" strokeWidth="2.800" />)}
        {borders[k].map((s) => <path key={s} d={wiggle(s, 6, 22)} stroke="#c8bdf5" strokeWidth="4" strokeDasharray="20 4" />)}
        {roads[k].map((s) => <path key={s} d={wiggle(s, 3, 26)} stroke="#fcc566" strokeWidth="3.900" />)}
      </g>
    ))}
    <path d="M799 496 855 481 936 466M853 481l6-10 10-3-4 12" fill="none" stroke="#b7a6fb" strokeWidth="2" />
    <g fontSize="11.500" fill="#a8a0cf">
      <text x="763" y="362" textLength="35" lengthAdjust="spacingAndGlyphs">НСКАЯ</text>
      <text x="763" y="374" textLength="26" lengthAdjust="spacingAndGlyphs">АСТЬ</text>
    </g>
    {Object.keys(labels).map((k) => (
      <g key={k} transform={tiles[k]}>{labels[k].map((l) => <TownLabel key={l[0]} item={l} />)}</g>
    ))}
    <circle cx="727.500" cy="438" r="2.200" fill="#fff" stroke="#555" />
    <Shield x={448} y={131}>Р-351</Shield>
    <Shield x={529} y={209}>Р-354</Shield>
    <Shield x={806} y={233}>Р-254</Shield>
    <path d="m381 126 13-11-3-2z" fill="#555" opacity=".7" />
    <path d="M380.700 126.500 378.500 112a11.500 11.500 0 1 1 13.500-4.500z" fill="#1e98ff" />
    <circle cx="382.300" cy="101.300" r="8.700" fill="#fff" />
    <path d="M0 242.500h7.300v15H0" fill="#fff" stroke="#999" />
    <path d="M20.500 136v150M25.500 136v150" stroke="#c9c9c9" strokeWidth="1.600" />
    <path d="M813.500 451v10M813.500 456h16M888.500 451v10M872 456h16" stroke="#444" fill="none" />
    <text x="834" y="460" fontSize="11.500" fontFamily='"DejaVu Sans", sans-serif' textLength="33" fill="#444">50 км</text>
    <g fontSize="11" fontFamily='"DejaVu Sans", sans-serif' fill="#111" stroke="#fffff8" strokeWidth="2" paintOrder="stroke">
      <text x="683.500" y="487" textLength="54.500" lengthAdjust="spacingAndGlyphs">© Яндекс</text>
      <text x="741.500" y="487" textLength="136.500" lengthAdjust="spacingAndGlyphs">Условия использования</text>
    </g>
    <path d="M741.500 488.500H878" stroke="#111" />
    <g fontSize="19" fontFamily="Roboto, sans-serif">
      <text x="888" y="490" fill="#e52620" textLength="7.500" lengthAdjust="spacingAndGlyphs">Я</text>
      <text x="896" y="490" fill="#333" textLength="34" lengthAdjust="spacingAndGlyphs">ндекс</text>
    </g>
  </svg>
);

const Map = () => (
  <MapBox>
    <MapDrawing />
    <MapButton $x={9} $y={10}>
      <svg width="17" height="17" viewBox="0 0 17 17" fill="#808080"><path d="M16 1 1 7.500l7 1.500.8 7z" /></svg>
    </MapButton>
    <MapButton $x={9} $y={108}>
      <svg width="14" height="14" viewBox="0 0 14 14" fill="#8c8c8c"><path d="M5 0h4v5h5v4H9v5H5V9H0V5h5z" /></svg>
    </MapButton>
    <MapButton $x={9} $y={226} $h={15}>
      <svg width="11" height="5" viewBox="0 0 11 5" stroke="#999" strokeDasharray="1 2"><path d="M0 1h11M0 4h11" /></svg>
    </MapButton>
    <MapButton $x={9} $y={286}>
      <svg width="14" height="4" viewBox="0 0 14 4"><path d="M0 0h14v4H0z" fill="#8c8c8c" /></svg>
    </MapButton>
    <MapButton $x={702} $y={10} $w={88}>
      <svg width="18" height="16" viewBox="0 0 18 16">
        <circle cx="9" cy="8" r="7" fill="#cfcfcf" />
        <path d="M1.500 8A7 7 0 0 1 8 1" fill="none" stroke="#bdbdbd" strokeWidth="1.500" />
        <path d="M9 1a7 7 0 0 1 7 7" fill="none" stroke="#777" strokeWidth="1.800" />
      </svg>
      <Text $ls={-0.35}>Пробки</Text>
    </MapButton>
    <MapButton $x={800} $y={10} $w={88}>
      <svg width="19" height="16" viewBox="0 0 19 16" fill="#fff" stroke="#777" strokeWidth="1.100" strokeLinejoin="round">
        <path d="M.7 11.300 9.500 15.300l8.800-4L9.500 7.300z" />
        <path d="M.7 8.100 9.500 12.100l8.800-4L9.500 4.100z" />
        <path d="M.7 4.800l8.800 4 8.800-4L9.500.8z" />
      </svg>
      <Text $ls={-0.2}>Слои</Text>
      <svg width="13" height="8" viewBox="3 0 13 8" fill="none" stroke="#666" strokeWidth="1.200"><path d="m1.500 1 5 5.500 5-5.500" transform="translate(1 0)" /></svg>
    </MapButton>
    <MapButton $x={897} $y={10}>
      <svg width="15" height="15" viewBox="0 0 15 15" fill="#808080">
        <path d="M9 .5h5.500V6l-1.800-1.800-2.200 2.200-1.900-1.900 2.200-2.200zM.5 9v5.500H6l-1.800-1.800 2.200-2.200-1.900-1.900-2.200 2.200z" />
      </svg>
    </MapButton>
    <MapButton $x={897} $y={442}>
      <svg width="20" height="8" viewBox="0 0 20 8" fill="none" stroke="#808080"><path d="M.5.5h19v7H.5zM4 1v3M7 1v2.500M10 1v3M13 1v2.500M16 1v3" /></svg>
    </MapButton>
    <Balloon>
      <BalloonTitle><Text $ls={-0.12}>Центральный офис в г. Челябинск</Text></BalloonTitle>
      <BalloonRow><Text $ls={-0.56}>+7 (351) 778-88-00, +7 (351) 778-88-00</Text></BalloonRow>
      <Text $block $ls={-0.44}>004500, г. Челябинск, ул.</Text>
      <Text $block $ls={-0.5}>Артиллерийская, д. 1, офис 45</Text>
      <CloseButton aria-label="close">
        <svg width="16" height="16" viewBox="0 0 16 16" stroke="#b0b0b0"><path d="m1 1 14 14M15 1 1 15" /></svg>
      </CloseButton>
    </Balloon>
  </MapBox>
);

/* ---------- page ---------- */

const Socials = ({ footer }) => (
  <>
    <Tile $footer={footer}><FaFacebookF size={footer ? 14 : 16} /></Tile>
    <Tile $footer={footer}><FaVk size={16} /></Tile>
    <Tile $footer={footer}><FaTwitter size={footer ? 15 : 16} /></Tile>
    <Tile $footer={footer}><FaOdnoklassniki size={footer ? 19 : 16} /></Tile>
    <Tile $footer={footer}><InstagramIcon size={footer ? 18 : 16} /></Tile>
    <Tile $footer={footer}><TubeIcon size={footer ? 20 : 16} hole={footer ? "#40584b" : "#f1f1f1"} /></Tile>
  </>
);

const LookOnMap = () => (
  <MapLink><Text $ls={-0.05}>Смотреть на карте</Text><ArrowIcon /></MapLink>
);

export default function App() {
  return (
    <>
      <GlobalStyle />
      <Header>
        <TopBar>
          <TopLinks>
            <Text $ls={0.08}>Компания</Text>
            <Text $ls={0.2}>Новости</Text>
            <Text $ls={0.22}>Статьи</Text>
          </TopLinks>
          <TopTools><Dots /><SearchIcon /></TopTools>
          <TopPhone>
            <Badge><svg width="13" height="13" viewBox="2 2 20 20" fill="currentColor"><path d={handset} /></svg></Badge>
            <Text $ls={-0.27}>+7 (351) 225-07-55</Text>
            <Chevron />
          </TopPhone>
          <TopAddress>
            <Badge><BadgePin /></Badge>
            <Text $ls={-0.12}>г. Челябинск, ул. Артиллерийская, д. 1</Text>
          </TopAddress>
        </TopBar>
        <MainBar>
          <Logo><LogoMark /><Text $ls={-0.6}>ZE Строй</Text></Logo>
          <Nav>
            <NavItem><Text $ls={-0.15}>Продукция</Text><Chevron /></NavItem>
            <NavItem><Text $ls={-0.36}>Услуги</Text><Chevron /></NavItem>
            <NavItem><Text $ls={-0.14}>Проекты</Text></NavItem>
            <NavItem><Text $ls={-0.17}>Отзывы</Text></NavItem>
            <NavItem><Text $ls={-0.09}>Видео</Text></NavItem>
            <RoundButton><Dots /></RoundButton>
          </Nav>
          <RoundButton $outlined><CartIcon /></RoundButton>
        </MainBar>
      </Header>

      <Hero>
        <Crumbs>
          <Text $ls={-0.09}>Главная</Text><span>-</span><Text $ls={-0.03}>Контакты</Text>
        </Crumbs>
        <Title>Контакты</Title>
      </Hero>

      <Page>
        <Office $divided>
          <OfficeName>Центральный офис в г. Челябинск</OfficeName>
          <OfficeGrid>
            <Contact $gap={2} $drop={2}>
              <PinIcon />
              <Stack $gap={10}>
                <Text $ls={-0.23}>ул. Артиллерийская, д. 1, офис 45</Text>
                <LookOnMap />
              </Stack>
            </Contact>
            <Stack $gap={15}>
              <Contact><MailIcon /><Text $ls={0.04}>info@zestroy.com</Text></Contact>
              <Contact><ClockIcon /><Text $ls={-0.12}>с 10:00 до 17:00</Text></Contact>
            </Stack>
            <Contact $gap={9} $drop={2}>
              <PhoneIcon />
              <Stack $gap={7}>
                <Text $ls={-0.31}>+7 (351) 778-88-00</Text>
                <Text $ls={-0.31}>+7 (351) 778-88-01</Text>
              </Stack>
            </Contact>
          </OfficeGrid>
        </Office>

        <Office>
          <OfficeName>Офис в г. Екатеринбург</OfficeName>
          <OfficeGrid>
            <Contact $gap={2} $drop={2}>
              <PinIcon />
              <Stack $gap={10}>
                <div>
                  <Text $block $ls={-0.21}>г. Екатеринбург, ул. Малышева, д. 23,</Text>
                  <Text $block $ls={-0.35}>офис 145</Text>
                </div>
                <LookOnMap />
              </Stack>
            </Contact>
            <Contact><MailIcon /><Text $ls={0.13}>ekb_info@zestroy.com</Text></Contact>
            <Contact $gap={9} $drop={2}><PhoneIcon /><Text $ls={-0.33}>+7 (345) 778-88-00</Text></Contact>
          </OfficeGrid>
        </Office>

        <Map />

        <Write>
          <Text $ls={-0.37}>Пишите нам:</Text>
          <IconRow $top={16}><Socials /></IconRow>
          <IconRow $top={20}>
            <Disc $color="#409fdb"><FaTelegramPlane size={19} /></Disc>
            <Disc $color="#6a5ba8"><WhatsAppIcon hole="#6a5ba8" /></Disc>
            <Disc $color="#10c144"><ViberIcon hole="#10c144" /></Disc>
          </IconRow>
        </Write>

        <Card>
          <CardHead>
            <CardTitle>Обратная связь</CardTitle>
            <CardLead>
              <Text $ls={-0.36}>Заполните форму, и наш менеджер</Text><br />
              <Text $ls={-0.5}>свяжется с Вами в ближайшее время</Text>
            </CardLead>
          </CardHead>
          <CardBody>
            <Label><Text $ls={-0.17}>E-mail</Text><Required>*</Required></Label>
            <Input type="text" />
            <Label $top={15}><Text $ls={-0.27}>Текст сообщения</Text><Required>*</Required></Label>
            <Area />
            <Submit type="button">Отправить</Submit>
            <Consent>
              <Text $ls={-0.35}>Нажимая на кнопку «Отправить», подтверждаю свое согласие с</Text><br />
              <a><Text $ls={-0.32}>условиями обработки персональных данных</Text></a>
            </Consent>
          </CardBody>
        </Card>
      </Page>

      <Footer>
        <FooterGrid>
          <FooterLinks>
            <Text $ls={-0.2}>Компания</Text><Text>Магазины</Text><Text>Новости</Text><Text>Статьи</Text><Text>Акции</Text>
          </FooterLinks>
          <FooterLinks>
            <Text>Видео</Text><Text>Услуги</Text><Text $ls={-0.08}>Продукция</Text><Text>Проекты</Text><Text>Отзывы</Text>
          </FooterLinks>
          <FooterLinks><Text>Партнеры</Text><Text>Контакты</Text></FooterLinks>
          <div>
            <Caption><Text $ls={-0.04}>Адрес офиса:</Text></Caption>
            <Value $weight={600}>
              <Text $block $ls={-0.21}>г. Челябинск, ул.</Text>
              <Text $block $ls={-0.21}>Артиллерийская, д. 1</Text>
            </Value>
            <Caption $top={32}><Text>Эл. почта:</Text></Caption>
            <Value $weight={400} $color={orange}><Text $ls={-0.06}>info@zestroy. com</Text></Value>
            <FooterTiles><Socials footer /></FooterTiles>
          </div>
          <div>
            <Caption><Text $ls={0.01}>Возникли вопросы? Звоните.</Text></Caption>
            <Value><Text $ls={-0.38}>+7 (351) 778-88-00</Text></Value>
            <Caption $top={1}><Text $ls={-0.3}>— call-центр</Text></Caption>
            <Value $top={7}><Text $ls={-0.38}>+7 (351) 778-88-01</Text></Value>
            <Caption $top={1}><Text $ls={-0.2}>— бухгалтерия</Text></Caption>
            <Pills>
              <Pill $w={171}><PillIcon><FaTelegramPlane size={19} /></PillIcon><Text $ls={-0.03}>Написать в Telegram</Text></Pill>
              <Pill $w={146}><PillIcon $pad={2}><ViberIcon hole="#40584b" /></PillIcon><Text>Написать в Viber</Text></Pill>
              <Pill $w={178}><PillIcon $pad={2}><WhatsAppIcon hole="#40584b" /></PillIcon><Text>Написать в WhatsApp</Text></Pill>
            </Pills>
          </div>
        </FooterGrid>
        <BottomBar>
          <Text $ls={-0.29}>«ЗЕ Строй» © 2021</Text>
          <Text>Договор оферты</Text>
          <Text $ls={0.11}>Политика конфинециальности</Text>
          <AgencyMark />
          <div>
            <Text $block $ls={0.27}>Интернет-агентство Tian Group:</Text>
            <Text $block $ls={-0.01}><b>создание</b> и <b>продвижение</b> сайтов</Text>
          </div>
        </BottomBar>
      </Footer>
    </>
  );
}
